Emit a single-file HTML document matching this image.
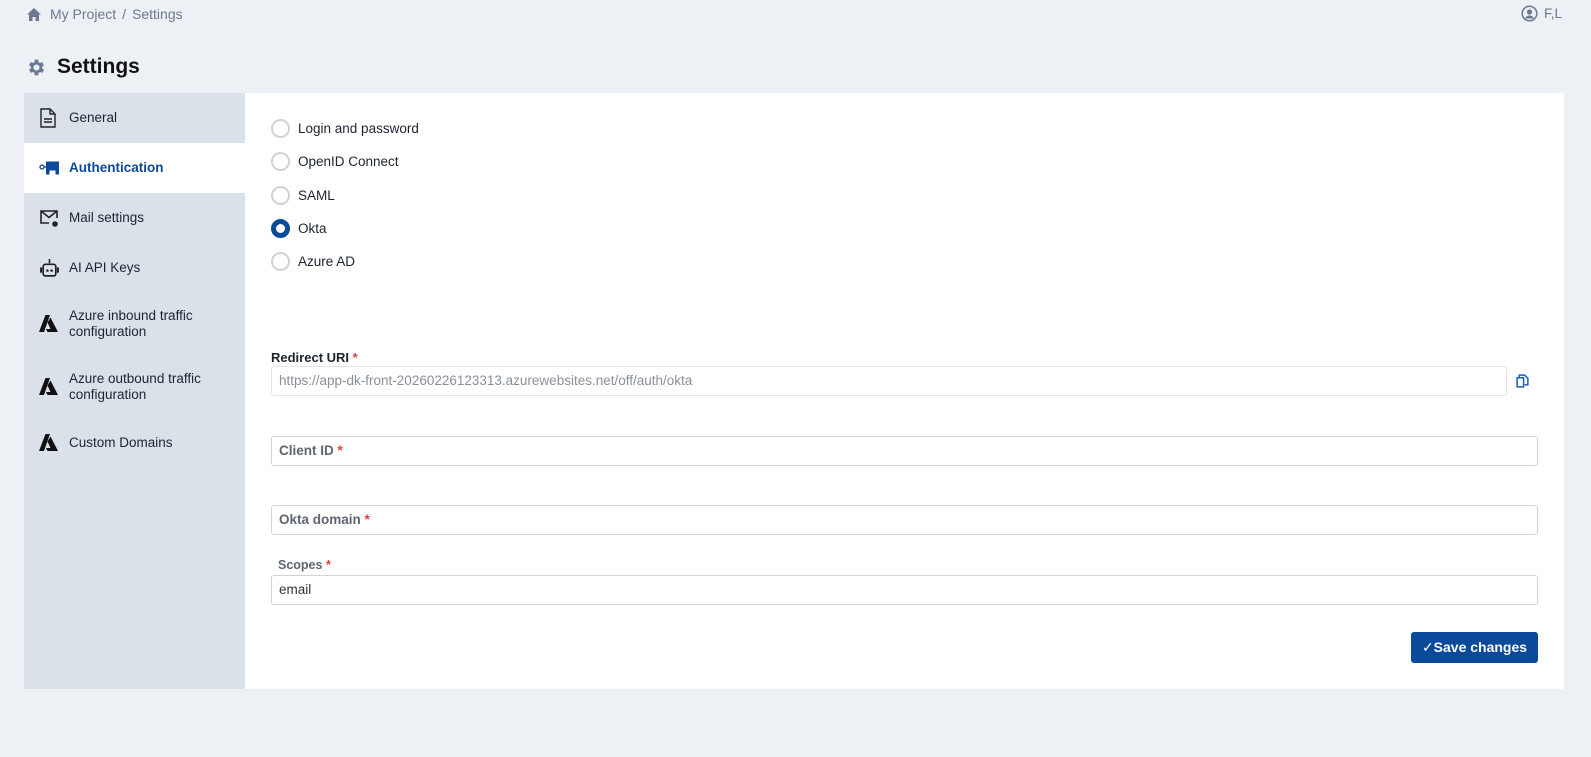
<!DOCTYPE html>
<html><head><meta charset="utf-8"><style>
*{box-sizing:border-box;margin:0;padding:0}
body{width:1591px;height:757px;background:#edf1f6;font-family:"Liberation Sans",sans-serif;color:#1d2330;position:relative;overflow:hidden}
.abs{position:absolute}
.crumb{left:26px;top:6px;font-size:14px;color:#6b7a90;display:flex;align-items:center;gap:6px}
.title{left:26px;top:55px;font-size:21px;font-weight:bold;color:#111;display:flex;align-items:center;gap:10px}
.side{left:24px;top:93px;width:221px;height:596px;background:#dbe1e9}
.item{position:absolute;left:0;width:221px;display:flex;align-items:center;font-size:13.5px;color:#1d2330}
.item svg{position:absolute;left:15px}
.item span{position:absolute;left:45px;line-height:16px}
.main{left:245px;top:93px;width:1319px;height:596px;background:#fff}
.radio{position:absolute;left:26px;width:19px;height:19px;border-radius:50%;border:2px solid #cfd3d9}
.rl{position:absolute;left:53px;font-size:13.5px;color:#1d2330}
.inp{position:absolute;left:26px;width:1267px;height:30px;border:1px solid #d0d4da;border-radius:3px;font-size:13.5px;padding-left:7px;line-height:28px;color:#6b7280}
.lbl{position:absolute;font-size:13px;font-weight:bold}
.req{color:#e0393e}
.btn{position:absolute;left:1166px;top:539px;width:127px;height:31px;background:#0b4a9a;border-radius:3px;color:#fff;font-size:14px;font-weight:bold;text-align:center;line-height:31px}
</style></head><body>
<div class="abs crumb"><svg width="16" height="15" viewBox="0 0 16 15"><path d="M8 1L1 7.5h2V14h3.5v-4h3v4H13V7.5h2z" fill="#6b7a90"/></svg><span style="margin-left:2px">My Project</span><span>/</span><span>Settings</span></div>
<div class="abs" style="left:1521px;top:5px;display:flex;align-items:center;gap:6px;font-size:13.5px;color:#6b7a90"><svg width="17" height="17" viewBox="0 0 17 17"><circle cx="8.5" cy="8.5" r="7.3" fill="none" stroke="#6b7a90" stroke-width="1.5"/><circle cx="8.5" cy="7" r="2.6" fill="#6b7a90"/><path d="M3.8 13.5c1.2-2.2 3-3 4.7-3s3.5.8 4.7 3" fill="#6b7a90"/></svg>F,L</div>
<div class="abs title"><svg width="21" height="21" viewBox="0 0 24 24"><path fill="#6b7a90" d="M19.4 13a7.5 7.5 0 000-2l2.1-1.6-2-3.5-2.5 1a7.4 7.4 0 00-1.7-1L15 3h-4l-.4 2.9a7.4 7.4 0 00-1.7 1l-2.5-1-2 3.5L6.6 11a7.5 7.5 0 000 2l-2.1 1.6 2 3.5 2.5-1c.5.4 1.1.7 1.7 1L11 21h4l.4-2.9c.6-.3 1.2-.6 1.7-1l2.5 1 2-3.5zM13 15.5a3.5 3.5 0 110-7 3.5 3.5 0 010 7z" transform="translate(-1 0)"/></svg>Settings</div>

<div class="abs side">
<div class="item" style="top:0;height:50px"><svg width="18" height="20" viewBox="0 0 18 20"><path d="M2 1h9l5 5v13H2z" fill="none" stroke="#222" stroke-width="1.4"/><path d="M11 1v5h5M5 11h8M5 14h8" stroke="#222" stroke-width="1.4" fill="none"/></svg><span>General</span></div>
<div class="item" style="top:50px;height:50px;background:#fff;font-weight:bold;color:#0b4a9a"><svg width="21" height="16" viewBox="0 0 21 16"><circle cx="3" cy="7" r="2" fill="none" stroke="#0b4a9a" stroke-width="1.3"/><path d="M5 7h2" stroke="#0b4a9a" stroke-width="1.3"/><path d="M7 1.5h13v13h-3.5v-4h-6v4H7z" fill="#0b4a9a"/></svg><span>Authentication</span></div>
<div class="item" style="top:100px;height:50px"><svg width="21" height="19" viewBox="0 0 21 19"><path d="M10 14H2V2h16v7M2 2l8 6.5L18 2" fill="none" stroke="#222" stroke-width="1.6"/><circle cx="16" cy="15" r="2.8" fill="#222"/></svg><span>Mail settings</span></div>
<div class="item" style="top:150px;height:50px"><svg width="21" height="21" viewBox="0 0 20 20"><path d="M10 1v4" stroke="#222" stroke-width="1.5"/><rect x="4" y="6" width="12" height="11" rx="2" fill="none" stroke="#222" stroke-width="1.6"/><rect x="1" y="9" width="2" height="5" fill="#222"/><rect x="17" y="9" width="2" height="5" fill="#222"/><circle cx="8" cy="12" r="1.2" fill="#222"/><circle cx="12" cy="12" r="1.2" fill="#222"/></svg><span>AI API Keys</span></div>
<div class="item" style="top:200px;height:62px"><svg width="19" height="18" viewBox="0 0 19 18"><path d="M6.5 0h4.5L5 17H0zM11.5 2.5L19 17H8.5l-1.5-3h4.5L8.5 7.5z" fill="#111"/></svg><span>Azure inbound traffic<br>configuration</span></div>
<div class="item" style="top:262px;height:63px"><svg width="19" height="18" viewBox="0 0 19 18"><path d="M6.5 0h4.5L5 17H0zM11.5 2.5L19 17H8.5l-1.5-3h4.5L8.5 7.5z" fill="#111"/></svg><span>Azure outbound traffic<br>configuration</span></div>
<div class="item" style="top:325px;height:50px"><svg width="19" height="18" viewBox="0 0 19 18"><path d="M6.5 0h4.5L5 17H0zM11.5 2.5L19 17H8.5l-1.5-3h4.5L8.5 7.5z" fill="#111"/></svg><span>Custom Domains</span></div>
</div>

<div class="abs main">
<div class="radio" style="top:26px"></div><div class="rl" style="top:28px">Login and password</div>
<div class="radio" style="top:59px"></div><div class="rl" style="top:61px">OpenID Connect</div>
<div class="radio" style="top:93px"></div><div class="rl" style="top:95px">SAML</div>
<div class="radio" style="top:126px;border:5px solid #0b4a9a"></div><div class="rl" style="top:128px">Okta</div>
<div class="radio" style="top:159px"></div><div class="rl" style="top:161px">Azure AD</div>

<div class="lbl" style="left:26px;top:257px">Redirect URI <span class="req">*</span></div>
<div class="inp" style="top:273px;width:1236px;border-color:#e3e5e8;color:#8a9099">https://app-dk-front-20260226123313.azurewebsites.net/off/auth/okta</div>
<svg class="abs" style="left:1271px;top:281px" width="13" height="14" viewBox="0 0 12 13"><path d="M3 3V1h5l3 3v6H8" fill="none" stroke="#1a5fb4" stroke-width="1.4"/><path d="M1 3.5h6v8.5H1z" fill="none" stroke="#1a5fb4" stroke-width="1.4"/></svg>

<div class="inp" style="top:343px;font-weight:bold;color:#5f6670">Client ID <span class="req">*</span></div>
<div class="inp" style="top:412px;font-weight:bold;color:#5f6670">Okta domain <span class="req">*</span></div>
<div class="lbl" style="left:33px;top:465px;font-size:12.5px;color:#5f6670">Scopes <span class="req">*</span></div>
<div class="inp" style="top:482px;color:#333">email</div>
<div class="btn"><span style="font-weight:normal">✓</span>Save changes</div>
</div>
</body></html>
